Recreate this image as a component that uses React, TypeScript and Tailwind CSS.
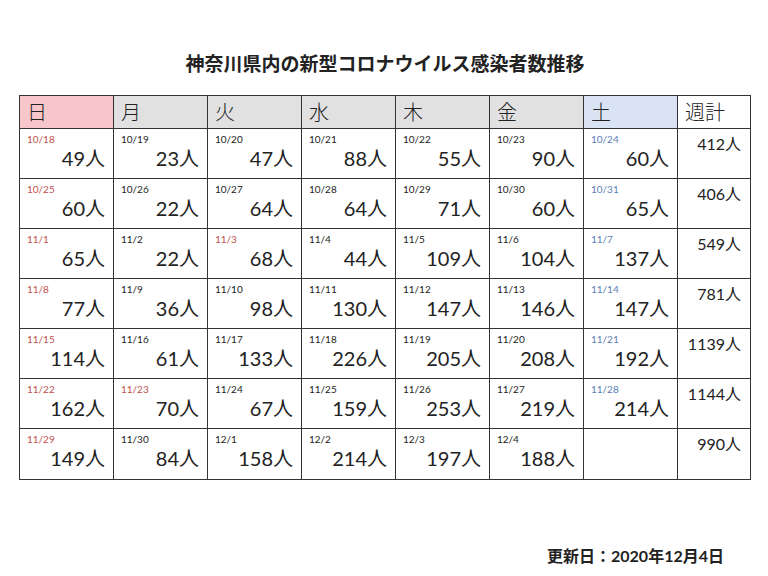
import { Fragment } from 'react';

const weeks: { d: string; n: number; c?: 'r' | 'b' }[][] = [
  [{ d: '10/18', n: 49, c: 'r' }, { d: '10/19', n: 23 }, { d: '10/20', n: 47 }, { d: '10/21', n: 88 }, { d: '10/22', n: 55 }, { d: '10/23', n: 90 }, { d: '10/24', n: 60, c: 'b' }],
  [{ d: '10/25', n: 60, c: 'r' }, { d: '10/26', n: 22 }, { d: '10/27', n: 64 }, { d: '10/28', n: 64 }, { d: '10/29', n: 71 }, { d: '10/30', n: 60 }, { d: '10/31', n: 65, c: 'b' }],
  [{ d: '11/1', n: 65, c: 'r' }, { d: '11/2', n: 22 }, { d: '11/3', n: 68, c: 'r' }, { d: '11/4', n: 44 }, { d: '11/5', n: 109 }, { d: '11/6', n: 104 }, { d: '11/7', n: 137, c: 'b' }],
  [{ d: '11/8', n: 77, c: 'r' }, { d: '11/9', n: 36 }, { d: '11/10', n: 98 }, { d: '11/11', n: 130 }, { d: '11/12', n: 147 }, { d: '11/13', n: 146 }, { d: '11/14', n: 147, c: 'b' }],
  [{ d: '11/15', n: 114, c: 'r' }, { d: '11/16', n: 61 }, { d: '11/17', n: 133 }, { d: '11/18', n: 226 }, { d: '11/19', n: 205 }, { d: '11/20', n: 208 }, { d: '11/21', n: 192, c: 'b' }],
  [{ d: '11/22', n: 162, c: 'r' }, { d: '11/23', n: 70, c: 'r' }, { d: '11/24', n: 67 }, { d: '11/25', n: 159 }, { d: '11/26', n: 253 }, { d: '11/27', n: 219 }, { d: '11/28', n: 214, c: 'b' }],
  [{ d: '11/29', n: 149, c: 'r' }, { d: '11/30', n: 84 }, { d: '12/1', n: 158 }, { d: '12/2', n: 214 }, { d: '12/3', n: 197 }, { d: '12/4', n: 188 }],
];
const totals = [412, 406, 549, 781, 1139, 1144, 990];

const heads = [
  { t: '日', bg: 'bg-[#f7c6cb]' },
  { t: '月', bg: 'bg-[#e1e1e1]' },
  { t: '火', bg: 'bg-[#e1e1e1]' },
  { t: '水', bg: 'bg-[#e1e1e1]' },
  { t: '木', bg: 'bg-[#e1e1e1]' },
  { t: '金', bg: 'bg-[#e1e1e1]' },
  { t: '土', bg: 'bg-[#d9e3f3]' },
  { t: '週計', bg: 'bg-white' },
];

const font = { fontFamily: 'Lato, "Noto Sans CJK JP", sans-serif' };

export default function App() {
  return (
    <div className="w-[768px] h-[576px] bg-white text-[#222] flex flex-col" style={font}>
      <h1 className="mt-[52px] h-[24px] text-center text-[19px] font-bold leading-[24px] pl-[2px]">
        神奈川県内の新型コロナウイルス感染者数推移
      </h1>

      <div className="ml-[19px] mt-[19px] w-[732px] border-[1.5px] border-[#333] grid grid-cols-[repeat(7,94px)_1fr]">
        {heads.map((h, i) => (
          <div
            key={h.t}
            className={`${h.bg} h-[33px] border-b-[1.5px] border-[#333] ${i < 7 ? 'border-r-[1.5px]' : ''} pl-[7px] text-[20px] leading-[32px] font-light`}
          >
            {h.t}
          </div>
        ))}
        {weeks.map((w, wi) => (
          <Fragment key={wi}>
            {Array.from({ length: 7 }).map((_, di) => {
              const c = w[di];
              return (
                <div
                  key={di}
                  className={`h-[50px] border-r-[1.5px] border-[#333] ${wi < 6 ? 'border-b-[1.5px]' : ''} flex flex-col pl-[7px] pr-[8px] pt-[3px]`}
                >
                  {c && (
                    <>
                      <span className={`text-[10px] leading-[14px] ${c.c === 'r' ? 'text-[#c0504d]' : c.c === 'b' ? 'text-[#5a7db5]' : 'text-[#222]'}`}>
                        {c.d}
                      </span>
                      <span className="text-right text-[20px] leading-[26px] -mt-[1px]">{c.n}人</span>
                    </>
                  )}
                </div>
              );
            })}
            <div
              className={`h-[50px] border-[#333] ${wi < 6 ? 'border-b-[1.5px]' : ''} text-right pr-[9px] pt-[4px] text-[16px] leading-[22px]`}
            >
              {totals[wi]}人
            </div>
          </Fragment>
        ))}
      </div>

      <div className="mt-[64px] flex justify-end pr-[44px]">
        <span className="text-[16px] font-bold">更新日：2020年12月4日</span>
      </div>
    </div>
  );
}
